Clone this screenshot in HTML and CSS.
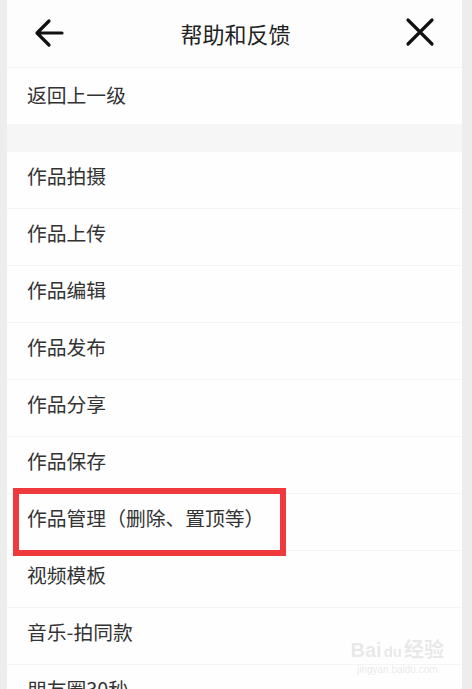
FILE: index.html
```html
<!DOCTYPE html>
<html lang="zh-CN">
<head>
    <meta charset="UTF-8">
    <meta name="viewport" content="width=device-width, initial-scale=1.0">
    <title>帮助和反馈</title>
    <link rel="stylesheet" href="styles.css">
</head>
<body>
    <div class="screen">
        <div class="top-bar">
            <span class="nav-icon back-icon">
                <svg width="32" height="32" viewBox="0 0 32 32"><path d="M29 16H5M16 4L4 16l12 12" fill="none" stroke="#111" stroke-width="3.2" stroke-linecap="round" stroke-linejoin="round"/></svg>
            </span>
            <span class="title">帮助和反馈</span>
            <span class="nav-icon close-icon">
                <svg width="30" height="30" viewBox="0 0 30 30"><path d="M3 3L27 27M27 3L3 27" fill="none" stroke="#111" stroke-width="3.2" stroke-linecap="round"/></svg>
            </span>
        </div>

        <div class="row back-row">返回上一级</div>
        <div class="spacer"></div>

        <div class="list">
            <div class="row">作品拍摄</div>
            <div class="row">作品上传</div>
            <div class="row">作品编辑</div>
            <div class="row">作品发布</div>
            <div class="row">作品分享</div>
            <div class="row">作品保存</div>
            <div class="row marked">作品管理（删除、置顶等）<span class="mark-box"></span></div>
            <div class="row">视频模板</div>
            <div class="row">音乐-拍同款</div>
            <div class="row">朋友圈30秒</div>
        </div>

        <div class="watermark">
            <span class="wm-logo">Bai<span class="wm-paw">du</span>经验</span>
            <span class="wm-url">jingyan.baidu.com</span>
        </div>
    </div>
</body>
</html>
```

FILE: styles.css
```css
body {
    margin: 0;
    background: #ededed;
    font-family: "Noto Sans CJK SC", "Noto Sans", sans-serif;
    overflow: hidden;
}
.screen {
    position: relative;
    margin-left: 7px;
    width: 455px;
    height: 689px;
    background: #fdfdfd;
    overflow: hidden;
}
.top-bar {
    height: 68px;
    display: flex;
    align-items: center;
    justify-content: space-between;
    padding: 0 26px 2px 26px;
    border-bottom: 1px solid #f3f3f3;
    box-sizing: border-box;
}
.nav-icon {
    display: flex;
    width: 32px;
    height: 32px;
    align-items: center;
    justify-content: center;
}
.close-icon {
    margin-top: -2px;
}
.title {
    font-size: 22px;
    color: #222;
    margin-left: 2px;
}
.row {
    height: 57px;
    display: flex;
    align-items: center;
    padding-left: 20px;
    font-size: 19.8px;
    color: #333;
    border-bottom: 1px solid #f4f4f4;
    box-sizing: border-box;
    background: #fefefe;
}
.back-row {
    height: 56px;
    border-bottom: none;
    padding-bottom: 3px;
}
.spacer {
    height: 28px;
    background: #f6f6f6;
}
.list .row {
    padding-bottom: 9px;
}
.marked {
    position: relative;
}
.mark-box {
    position: absolute;
    left: 6px;
    top: -6px;
    width: 273px;
    height: 68px;
    border: 6px solid #ee3a3c;
    box-sizing: border-box;
}
.watermark {
    position: absolute;
    right: 18px;
    bottom: 14px;
    display: flex;
    flex-direction: column;
    align-items: center;
    color: rgba(190, 190, 190, 0.35);
    font-family: "Liberation Sans", "Noto Sans CJK SC", sans-serif;
}
.wm-logo {
    font-size: 20px;
    font-weight: bold;
    line-height: 24px;
}
.wm-paw {
    display: inline-block;
    padding: 0 2px;
    font-size: 15px;
}
.wm-url {
    font-size: 10px;
}
```
